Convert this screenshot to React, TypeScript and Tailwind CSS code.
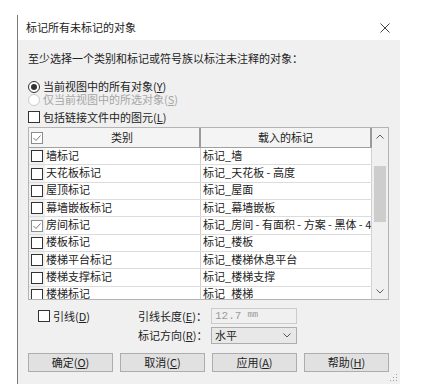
const rows: { cat: string; tag: string; checked?: boolean }[] = [
  { cat: "墙标记", tag: "标记_墙" },
  { cat: "天花板标记", tag: "标记_天花板 - 高度" },
  { cat: "屋顶标记", tag: "标记_屋面" },
  { cat: "幕墙嵌板标记", tag: "标记_幕墙嵌板" },
  { cat: "房间标记", tag: "标记_房间 - 有面积 - 方案 - 黑体 - 4-5mm - 0-8", checked: true },
  { cat: "楼板标记", tag: "标记_楼板" },
  { cat: "楼梯平台标记", tag: "标记_楼梯休息平台" },
  { cat: "楼梯支撑标记", tag: "标记_楼梯支撑" },
  { cat: "楼梯标记", tag: "标记_楼梯" },
];

function Check({ checked, muted }: { checked?: boolean; muted?: boolean }) {
  return (
    <span
      className={`flex h-[12px] w-[12px] shrink-0 items-center justify-center border bg-white ${
        muted ? "border-[#8c8c8c]" : "border-[#333333]"
      }`}
    >
      {checked && (
        <svg width="10" height="10" viewBox="0 0 10 10">
          <path
            d="M1.5 5 L4 7.5 L8.5 2.5"
            fill="none"
            stroke={muted ? "#777" : "#333"}
            strokeWidth="1"
          />
        </svg>
      )}
    </span>
  );
}

function Radio({ on, disabled }: { on?: boolean; disabled?: boolean }) {
  return (
    <span
      className={`flex h-[12px] w-[12px] shrink-0 items-center justify-center rounded-full border bg-white ${
        disabled ? "border-[#cccccc]" : "border-[#333333]"
      }`}
    >
      {on && <span className="h-[6px] w-[6px] rounded-full bg-[#333333]" />}
    </span>
  );
}

export default function App() {
  return (
    <div
      className="h-[384px] w-[423px] overflow-hidden bg-white pl-[17px] pt-[15px] text-[11px] text-[#222222]"
      style={{ fontFamily: '"Noto Sans CJK SC", "Noto Sans", sans-serif' }}
    >
      <div className="flex h-[369px] w-[383px] flex-col border-l border-[#7a7a7a]">
        {/* Title bar */}
        <div className="flex h-[25px] shrink-0 items-center justify-between bg-white pl-[8px] pr-[10px]">
          <span className="leading-none">标记所有未标记的对象</span>
          <svg width="10" height="10" viewBox="0 0 10 10">
            <path d="M0.5 0.5 L9.5 9.5 M9.5 0.5 L0.5 9.5" stroke="#444" strokeWidth="1" />
          </svg>
        </div>

        {/* Body */}
        <div className="relative flex flex-1 flex-col bg-[#f0f0f0] pl-[10px] pr-[11px] pt-[10px]">
          <div className="h-[16px] leading-[16px]">
            至少选择一个类别和标记或符号族以标注未注释的对象：
          </div>

          <div className="mt-[14px] flex h-[13px] items-center gap-[3px]">
            <Radio on />
            <span className="leading-none">
              当前视图中的所有对象(<u>Y</u>)
            </span>
          </div>
          <div className="flex h-[13px] items-center gap-[3px] text-[#a6a6a6]">
            <Radio disabled />
            <span className="leading-none">
              仅当前视图中的所选对象(<u>S</u>)
            </span>
          </div>
          <div className="mt-[4px] flex h-[14px] items-center gap-[3px]">
            <Check />
            <span className="leading-none">
              包括链接文件中的图元(<u>L</u>)
            </span>
          </div>

          {/* Table */}
          <div className="mt-[3px] flex h-[173px] w-[361px] overflow-hidden border border-[#b4b4b4] bg-[#f0f0f0]">
            <div className="flex min-w-0 flex-1 flex-col">
              <div className="flex h-[20px] shrink-0 border-b border-[#a0a0a0] bg-[#f4f4f4]">
                <div className="flex w-[16px] items-center pl-[2px]">
                  <Check checked muted />
                </div>
                <div className="flex w-[156px] items-center justify-center border-r-2 border-[#9a9a9a]">
                  类别
                </div>
                <div className="flex flex-1 items-center justify-center border-r-2 border-[#9a9a9a]">
                  载入的标记
                </div>
              </div>
              {rows.map((r) => (
                <div
                  key={r.cat}
                  className="flex h-[17.35px] shrink-0 border-b border-[#dcdcdc]"
                >
                  <div className="flex w-[16px] items-center bg-[#f0f0f0] pl-[2px]">
                    <Check checked={r.checked} muted={r.checked} />
                  </div>
                  <div className="flex w-[156px] items-center border-r border-[#d0d0d0] bg-white pb-[2px] pl-[1px] leading-none">
                    {r.cat}
                  </div>
                  <div className="flex min-w-0 flex-1 items-center overflow-hidden whitespace-nowrap border-r border-[#d0d0d0] bg-white pb-[2px] pl-[2px] leading-none">
                    {r.tag}
                  </div>
                </div>
              ))}
            </div>
            {/* Scrollbar */}
            <div className="flex w-[16px] shrink-0 flex-col items-center bg-[#f0f0f0]">
              <div className="flex h-[17px] items-center justify-center">
                <svg width="8" height="5" viewBox="0 0 8 5">
                  <path d="M0.5 4.5 L4 1 L7.5 4.5" fill="none" stroke="#606060" strokeWidth="1" />
                </svg>
              </div>
              <div className="mt-[21px] h-[56px] w-[12px] bg-[#cdcdcd]" />
              <div className="flex-1" />
              <div className="flex h-[16px] items-center justify-center">
                <svg width="8" height="5" viewBox="0 0 8 5">
                  <path d="M0.5 0.5 L4 4 L7.5 0.5" fill="none" stroke="#606060" strokeWidth="1" />
                </svg>
              </div>
            </div>
          </div>

          {/* Leader options */}
          <div className="mt-[8px] flex h-[16px] items-center">
            <div className="flex w-[110px] items-center gap-[3px] pl-[10px]">
              <Check />
              <span className="leading-none">
                引线(<u>D</u>)
              </span>
            </div>
            <div className="w-[73px] whitespace-nowrap leading-none">
              引线长度(<u>E</u>)：
            </div>
            <div
              className="flex h-[16px] w-[86px] items-center border border-[#cccccc] bg-[#f0f0f0] pl-[3px] text-[11px] text-[#9a9a9a]"
              style={{ fontFamily: '"Liberation Mono", monospace' }}
            >
              12.7 <span className="ml-[6px] text-[9px]">mm</span>
            </div>
          </div>
          <div className="mt-[3px] flex h-[17px] items-center">
            <div className="w-[110px]" />
            <div className="w-[73px] whitespace-nowrap leading-none">
              标记方向(<u>R</u>)：
            </div>
            <div className="flex h-[17px] w-[86px] items-center justify-between border border-[#adadad] bg-[#e8e8e8] pl-[3px] pr-[5px]">
              <span className="leading-none">水平</span>
              <svg width="8" height="5" viewBox="0 0 8 5">
                <path d="M0.5 0.5 L4 4 L7.5 0.5" fill="none" stroke="#555" strokeWidth="1" />
              </svg>
            </div>
          </div>

          {/* Buttons */}
          <div className="mt-[9px] flex w-[361px] justify-between">
            {[
              ["确定", "O"],
              ["取消", "C"],
              ["应用", "A"],
              ["帮助", "H"],
            ].map(([t, k]) => (
              <div
                key={k}
                className="flex h-[19px] w-[85px] items-center justify-center border border-[#adadad] bg-[#e1e1e1] leading-none"
              >
                {t}(<u>{k}</u>)
              </div>
            ))}
          </div>

          {/* Resize grip */}
          <svg className="absolute bottom-[2px] right-[2px]" width="8" height="8" viewBox="0 0 8 8">
            <rect x="6" y="0" width="1" height="1" fill="#a0a0a0" />
            <rect x="3" y="3" width="1" height="1" fill="#a0a0a0" />
            <rect x="6" y="3" width="1" height="1" fill="#a0a0a0" />
            <rect x="0" y="6" width="1" height="1" fill="#a0a0a0" />
            <rect x="3" y="6" width="1" height="1" fill="#a0a0a0" />
            <rect x="6" y="6" width="1" height="1" fill="#a0a0a0" />
          </svg>
        </div>
      </div>
    </div>
  );
}
